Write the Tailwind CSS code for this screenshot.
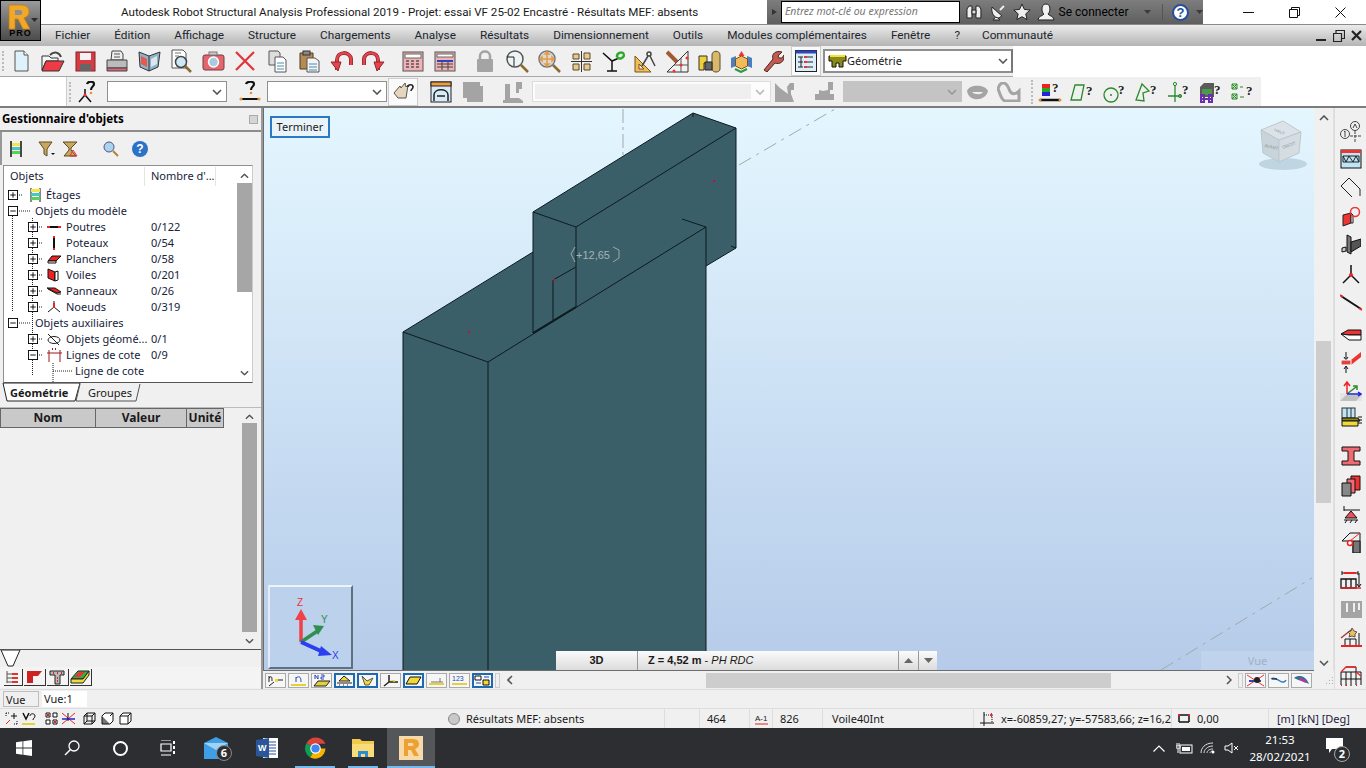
<!DOCTYPE html>
<html lang="fr">
<head>
<meta charset="UTF-8">
<title>Autodesk Robot Structural Analysis Professional 2019</title>
<script src="https://cdn.jsdelivr.net/npm/@tailwindcss/browser@4"></script>
</head>
<body class="bg-white overflow-hidden">
<!-- shared tree symbols -->
<svg class="hidden">
  <symbol id="plus" viewBox="0 0 11 11"><rect x=".5" y=".5" width="10" height="10" fill="#fff" stroke="#000"/><path d="M2.5 5.5h6M5.5 2.5v6" stroke="#000"/></symbol>
  <symbol id="minus" viewBox="0 0 11 11"><rect x=".5" y=".5" width="10" height="10" fill="#fff" stroke="#000"/><path d="M2.5 5.5h6" stroke="#000"/></symbol>
  <symbol id="chev-up" viewBox="0 0 10 6"><path d="M1 5l4-4 4 4" fill="none" stroke="#555" stroke-width="1.6"/></symbol>
  <symbol id="chev-down" viewBox="0 0 10 6"><path d="M1 1l4 4 4-4" fill="none" stroke="#555" stroke-width="1.6"/></symbol>
  <symbol id="qmark" viewBox="0 0 8 12"><text x="0" y="11" font-family="Liberation Serif" font-weight="700" font-size="13" fill="#222">?</text></symbol>
</svg>

<div class="relative w-[1366px] h-[768px] flex flex-col overflow-hidden text-[#1a1a1a] font-['Noto_Sans',sans-serif]">

  <!-- app logo, sits over title and menu bars -->
  <div class="absolute left-0 top-0 w-[41px] h-[41px] z-10 border border-black bg-linear-to-b from-[#9a9a9a] to-[#4c4c4c] overflow-hidden">
    <svg class="absolute left-[6px] top-[2px] w-[24px] h-[27px]" viewBox="0 0 24 27"><path d="M2 2h12c6 0 8 3 8 7 0 3-2 5-5 6l6 11h-7l-5-10H8v10H2z" fill="#f0a828" stroke="#c67a10" stroke-width=".7"/><path d="M8 7v5h5c3 0 3-5 0-5z" fill="#8d8d8d"/></svg>
    <svg class="absolute right-[2px] top-[17px] w-[7px] h-[4px]" viewBox="0 0 7 4"><path d="M0 0h7L3.500 4z" fill="#2b2b2b"/></svg>
    <div class="absolute left-0 right-0 bottom-[1px] text-center text-[9px] leading-[11px] font-bold tracking-[1px] text-black font-['Liberation_Sans',sans-serif]">PRO</div>
  </div>

  <!-- title bar -->
  <div class="h-[24px] flex items-center bg-white shrink-0">
    <div class="w-[767px] pl-[121px] pt-[1px] text-[11.6px] whitespace-nowrap font-['Roboto',sans-serif]">Autodesk Robot Structural Analysis Professional 2019 - Projet: essai VF 25-02 Encastré - Résultats MEF: absents</div>
    <div class="w-[436px] h-[24px] flex items-center bg-linear-to-b from-[#7d7d7d] to-[#5f5f5f]">
      <svg class="w-[14px] h-[24px]" viewBox="0 0 14 24"><path d="M5 9l5 3-5 3z" fill="#333"/></svg>
      <div class="w-[180px] h-[22px] bg-white border border-black flex items-center pl-[3px] text-[10.500px] italic text-[#777] whitespace-nowrap">Entrez mot-clé ou expression</div>
      <svg class="w-[18px] h-[18px] ml-[5px]" viewBox="0 0 18 18"><path d="M2 15V6l2-3h3v12zM11 15V3h3l2 3v9z" fill="#eee" stroke="#222"/><path d="M7 7h4v4H7z" fill="#ddd" stroke="#222"/></svg>
      <svg class="w-[18px] h-[18px] ml-[6px]" viewBox="0 0 18 18"><path d="M3 4l10 9-3 2c-5 0-8-5-7-11zM6 15l-2 2h7l-2-2" fill="#eee" stroke="#222"/><path d="M11 7l4-4" stroke="#eee" stroke-width="2"/></svg>
      <svg class="w-[18px] h-[18px] ml-[6px]" viewBox="0 0 18 18"><path d="M9 1l2.400 5.400 5.800.6-4.400 3.900 1.300 5.700L9 13.700 3.900 16.600l1.300-5.700L.8 7l5.800-.6z" fill="#eee" stroke="#222"/></svg>
      <svg class="w-[18px] h-[18px] ml-[6px]" viewBox="0 0 18 18"><path d="M9 1c3 0 4 2 4 5s-1 4-2 5c1 2 6 2 6 6H1c0-4 5-4 6-6-1-1-2-2-2-5s1-5 4-5z" fill="#f2f2f2" stroke="#222"/></svg>
      <span class="ml-[4px] text-[12px] text-black whitespace-nowrap w-[86px] font-['Roboto',sans-serif]">Se connecter</span>
      <svg class="w-[7px] h-[4px]" viewBox="0 0 7 4"><path d="M0 0h7L3.500 4z" fill="#3b3b3b"/></svg>
      <span class="ml-[11px] w-px h-[16px] bg-[#555]"></span>
      <span class="ml-[9px] w-[17px] h-[17px] rounded-full bg-white border-2 border-[#254f9c] text-[#254f9c] text-[13px] font-bold leading-[13px] text-center font-['Liberation_Sans',sans-serif]">?</span>
      <svg class="w-[7px] h-[4px] ml-[7px]" viewBox="0 0 7 4"><path d="M0 0h7L3.500 4z" fill="#3b3b3b"/></svg>
    </div>
    <div class="flex-1 flex items-center h-[24px] pl-[40px]">
      <svg class="w-[11px] h-[11px]" viewBox="0 0 11 11"><path d="M0 5.500h11" stroke="#111"/></svg>
      <svg class="w-[11px] h-[11px] ml-[35px]" viewBox="0 0 11 11"><path d="M.5 2.500h8v8h-8zM2.500 2.500v-2h8v8h-2" fill="none" stroke="#111"/></svg>
      <svg class="w-[11px] h-[11px] ml-[35px]" viewBox="0 0 11 11"><path d="M.5.500l10 10M10.500.500l-10 10" stroke="#111"/></svg>
    </div>
  </div>

  <!-- menu bar -->
  <div class="h-[22px] shrink-0 flex items-center bg-linear-to-b from-[#ececec] to-[#b4b4b4] border-t border-[#8a8a8a] text-[11.8px] text-[#20262e] whitespace-nowrap font-['Roboto',sans-serif]">
    <span class="ml-[55px]">Fichier</span>
    <span class="ml-[24px]">Édition</span>
    <span class="ml-[24px]">Affichage</span>
    <span class="ml-[24px]">Structure</span>
    <span class="ml-[24px]">Chargements</span>
    <span class="ml-[24px]">Analyse</span>
    <span class="ml-[24px]">Résultats</span>
    <span class="ml-[24px]">Dimensionnement</span>
    <span class="ml-[24px]">Outils</span>
    <span class="ml-[24px]">Modules complémentaires</span>
    <span class="ml-[24px]">Fenêtre</span>
    <span class="ml-[24px]">?</span>
    <span class="ml-[22px]">Communauté</span>
    <div class="ml-auto flex items-center gap-[6px] pr-[4px]">
      <svg class="w-[11px] h-[12px]" viewBox="0 0 11 12"><path d="M0 10h10" stroke="#222" stroke-width="2"/></svg>
      <svg class="w-[12px] h-[12px]" viewBox="0 0 12 12"><path d="M.5 3.500h8v8h-8zM3 3V.500h8.500v8H9" fill="none" stroke="#222" stroke-width="1.200"/></svg>
      <svg class="w-[11px] h-[11px]" viewBox="0 0 11 11"><path d="M1 1l9 9M10 1l-9 9" stroke="#222" stroke-width="2.200"/></svg>
    </div>
  </div>

  <!-- toolbar 1 -->
  <div class="h-[31px] shrink-0 flex items-center">
    <div class="w-[1013px] h-[31px] bg-[#f0f0f0] border-b border-[#a8a8a8] flex items-center">
      <span class="ml-[2px] w-[3px] h-[20px] border-l-2 border-dotted border-[#bbb]"></span>
      <span class="w-8 flex justify-center"><svg class="w-[22px] h-[22px]" viewBox="0 0 22 22"><path d="M5 1h9l4 4v16H5z" fill="#dff1fb" stroke="#555"/><path d="M14 1v4h4" fill="#fff" stroke="#555"/></svg></span>
      <span class="w-8 flex justify-center"><svg class="w-[24px] h-[22px]" viewBox="0 0 24 22"><path d="M1 6h7l2 2h7v3H5L1 20z" fill="#f6f6f6" stroke="#333"/><path d="M5 11h18l-5 10H1z" fill="#ee3b45" stroke="#333"/><path d="M9 5c4-4 9-3 11 2" fill="none" stroke="#444" stroke-width="2"/></svg></span>
      <span class="w-8 flex justify-center"><svg class="w-[21px] h-[21px]" viewBox="0 0 21 21"><rect x="1" y="1" width="19" height="19" fill="#d83c43" stroke="#7e2328"/><rect x="5" y="2" width="11" height="7" fill="#f3f3f3"/><rect x="5" y="13" width="11" height="7" fill="#666"/></svg></span>
      <span class="w-8 flex justify-center"><svg class="w-[22px] h-[22px]" viewBox="0 0 22 22"><path d="M6 1h9l2 3v6H5z" fill="#eee" stroke="#444"/><path d="M1 10h20v8H1z" fill="#bbb" stroke="#444"/><path d="M1 18h20v3H1z" fill="#d9667c" stroke="#444"/><path d="M8 4h6M8 7h6" stroke="#555"/></svg></span>
      <span class="w-8 flex justify-center"><svg class="w-[24px] h-[22px]" viewBox="0 0 24 22"><path d="M12 6L2 2l1 15 9 4 9-4 2-15z" fill="#8fb2c8" stroke="#333"/><path d="M12 6v15" stroke="#333"/><path d="M4 6l6 3v8l-6-3z" fill="#e8584d"/><path d="M14 9l6-3v8l-6 3z" fill="#dbe7ef"/></svg></span>
      <span class="w-8 flex justify-center"><svg class="w-[24px] h-[24px]" viewBox="0 0 24 24"><path d="M3 1h11l3 3v15H3z" fill="#fff" stroke="#555"/><circle cx="12" cy="13" r="5.500" fill="#cfe8f7" stroke="#444" stroke-width="1.500"/><path d="M16 17l6 6" stroke="#8a6a33" stroke-width="2.500"/><path d="M6 4h6M6 7h4" stroke="#777"/></svg></span>
      <span class="w-8 flex justify-center"><svg class="w-[23px] h-[20px]" viewBox="0 0 23 20"><rect x="1" y="4" width="21" height="15" rx="2" fill="#e36570" stroke="#7a3a40"/><rect x="7" y="1" width="8" height="3" fill="#ccc" stroke="#777"/><circle cx="11.500" cy="11" r="5" fill="#a9cbe0" stroke="#fff" stroke-width="1.500"/></svg></span>
      <span class="w-8 flex justify-center"><svg class="w-[22px] h-[22px]" viewBox="0 0 22 22"><path d="M2 2l18 18M20 2L2 20" stroke="#e2333b" stroke-width="2.200"/></svg></span>
      <span class="w-8 flex justify-center"><svg class="w-[21px] h-[23px]" viewBox="0 0 21 23"><path d="M2 1h9l2 2v12H2z" fill="#ddd" stroke="#555"/><path d="M8 7h8l3 3v12H8z" fill="#fff" stroke="#555"/><path d="M10 13h7M10 16h7M10 19h7" stroke="#4a8cb0"/></svg></span>
      <span class="w-8 flex justify-center"><svg class="w-[21px] h-[23px]" viewBox="0 0 21 23"><path d="M1 3h13v16H1z" fill="#b68a54" stroke="#4e3b1f"/><rect x="4" y="1" width="7" height="4" fill="#888" stroke="#333"/><path d="M8 8h8l4 3v11H8z" fill="#f4f4f4" stroke="#555"/><path d="M10 14h8M10 17h8M10 20h8" stroke="#4a8cb0"/></svg></span>
      <span class="w-8 flex justify-center"><svg class="w-[23px] h-[22px]" viewBox="0 0 23 22"><path d="M7 20V10c0-9 13-9 14-1v6" fill="none" stroke="#8d2a30" stroke-width="4"/><path d="M7 20V10c0-9 13-9 14-1v6" fill="none" stroke="#e8434a" stroke-width="2.400"/><path d="M1 12l7 9 3-9z" fill="#e8434a" stroke="#8d2a30"/></svg></span>
      <span class="w-8 flex justify-center"><svg class="w-[23px] h-[22px]" viewBox="0 0 23 22"><path d="M16 20V10C16 1 3 1 2 9v6" fill="none" stroke="#8d2a30" stroke-width="4"/><path d="M16 20V10C16 1 3 1 2 9v6" fill="none" stroke="#e8434a" stroke-width="2.400"/><path d="M22 12l-7 9-3-9z" fill="#e8434a" stroke="#8d2a30"/></svg></span>
      <span class="w-8 flex justify-center ml-[8px]"><svg class="w-[22px] h-[21px]" viewBox="0 0 22 21"><rect x="1" y="1" width="20" height="19" fill="#f1b2b5" stroke="#555"/><rect x="3" y="3" width="16" height="4" fill="#fff" stroke="#666"/><path d="M4 10h3M9 10h3M14 10h3M4 13h3M9 13h3M14 13h3M4 16h3M9 16h3M14 16h3" stroke="#555" stroke-width="1.500"/></svg></span>
      <span class="w-8 flex justify-center"><svg class="w-[22px] h-[21px]" viewBox="0 0 22 21"><rect x="1" y="1" width="20" height="19" fill="#f1b2b5" stroke="#555"/><rect x="3" y="3" width="16" height="3" fill="#fff" stroke="#666"/><rect x="3" y="9" width="16" height="2" fill="#2a46b8"/><path d="M3 13h16M3 16h16M8 11v8M14 11v8" stroke="#444"/></svg></span>
      <span class="w-8 flex justify-center ml-[8px]"><svg class="w-[16px] h-[22px]" viewBox="0 0 16 22"><path d="M3 9V6c0-6 10-6 10 0v3" fill="none" stroke="#a4a4a4" stroke-width="2.500"/><rect y="9" width="16" height="13" rx="1" fill="#a4a4a4"/></svg></span>
      <span class="w-8 flex justify-center"><svg class="w-[24px] h-[24px]" viewBox="0 0 24 24"><circle cx="10" cy="10" r="8" fill="#eef3f6" stroke="#555" stroke-width="1.500"/><path d="M2 8h7v9" fill="none" stroke="#222"/><path d="M16 16l7 7" stroke="#8a6a33" stroke-width="2.500"/></svg></span>
      <span class="w-8 flex justify-center"><svg class="w-[24px] h-[24px]" viewBox="0 0 24 24"><circle cx="10" cy="10" r="8" fill="#d6dadd" stroke="#777" stroke-width="1.500"/><path d="M10 3v14M3 10h14M10 3l-2 2h4zM10 17l-2-2h4zM3 10l2-2v4zM17 10l-2-2v4z" fill="#e99a3e" stroke="#e99a3e" stroke-width="1.500"/><path d="M16 16l7 7" stroke="#8a6a33" stroke-width="2.500"/></svg></span>
      <span class="w-8 flex justify-center"><svg class="w-[23px] h-[23px]" viewBox="0 0 23 23"><path d="M11.500 1v21M1 11.500h21" stroke="#333"/><path d="M3 4h6v5H3zM14 3h6v6h-6zM3 14h6v6H3zM14 14h6v6h-6z" fill="#e6c994" stroke="#5e4a25"/></svg></span>
      <span class="w-8 flex justify-center"><svg class="w-[23px] h-[21px]" viewBox="0 0 23 21"><path d="M1 2l9 8 7-3M10 10v10M5 20h10" fill="none" stroke="#111" stroke-width="1.500"/><path d="M15 6a4 4 0 0 1 7-3M22 3a4 4 0 0 1-7 3" fill="none" stroke="#2eaa2e" stroke-width="2.500"/></svg></span>
      <span class="w-8 flex justify-center"><svg class="w-[23px] h-[23px]" viewBox="0 0 23 23"><path d="M1 22L1 6l16 16z" fill="#f0bd5a" stroke="#7b5416"/><path d="M5 14l5 5H5z" fill="#f0f0f0" stroke="#7b5416"/><circle cx="15" cy="4" r="2" fill="none" stroke="#444" stroke-width="1.500"/><path d="M14 6L8 16M16 6l5 10" stroke="#444" stroke-width="1.500"/></svg></span>
      <span class="w-8 flex justify-center"><svg class="w-[23px] h-[23px]" viewBox="0 0 23 23"><path d="M22 1v21H1z" fill="#f2f2f2" stroke="#333"/><path d="M8 15h14M15 8v14" stroke="#555"/><path d="M1 2l10 10" stroke="#a15b31" stroke-width="4"/><circle cx="15" cy="15" r="1.500" fill="#e33"/><circle cx="8" cy="21" r="1.500" fill="#e33"/><circle cx="21" cy="8" r="1.500" fill="#e33"/></svg></span>
      <span class="w-8 flex justify-center"><svg class="w-[23px] h-[23px]" viewBox="0 0 23 23"><path d="M1 6h8v7H6v7H1z" fill="#f0d03a" stroke="#333"/><path d="M14 5c0-5 8-5 8 0v14c0 4-8 4-8 0z" fill="#d8b86c" stroke="#5a4a22"/><path d="M7 12h7v8H7z" fill="#666" stroke="#222"/></svg></span>
      <span class="w-8 flex justify-center"><svg class="w-[23px] h-[23px]" viewBox="0 0 23 23"><path d="M11.500 1l-3 5h6z" fill="#e33"/><path d="M1 8l5-2v10l-5 2zM22 8l-5-2v10l5 2z" fill="#4a7ec2"/><path d="M11.500 6l6 3v7l-6 3-6-3V9z" fill="#f2bb5a" stroke="#7b5416"/><path d="M5 19l6 3 6-3" fill="none" stroke="#2a9a3e" stroke-width="2"/></svg></span>
      <span class="w-8 flex justify-center"><svg class="w-[22px] h-[22px]" viewBox="0 0 22 22"><path d="M2 20L11 9c-2-5 3-9 9-7l-4 4 1 2 3 0 2-3c1 6-4 10-9 8L5 22z" fill="#c25a50" stroke="#4a2a25"/></svg></span>
      <span class="w-[30px] h-[30px] ml-[2px] flex items-center justify-center bg-[#fafafa] border border-[#ccc]"><svg class="w-[22px] h-[22px]" viewBox="0 0 22 22"><rect x=".5" y=".5" width="21" height="21" fill="#dceefa" stroke="#222"/><rect x=".5" y=".5" width="21" height="3" fill="#2a46b8"/><path d="M3 7h5M3 12h5M3 17h5M6 7v10M10 7h8M10 12h8M10 17h8" stroke="#222"/><path d="M9 7h3M9 12h3M9 17h3" stroke="#e33" stroke-width="2"/></svg></span>
      <div class="ml-[2px] w-[190px] h-[24px] bg-white border-2 border-[#8f8f8f] border-r-[#777] flex items-center pl-[3px] text-[11px]">
        <svg class="w-[19px] h-[13px]" viewBox="0 0 19 13"><path d="M1 1h17v5h-3v6h-4V8H8v4H4V6H1z" fill="#8a8a18" stroke="#111"/><path d="M2 1h15" stroke="#f3e232" stroke-width="2"/></svg>
        <span class="pt-[1px]">Géométrie</span>
        <svg class="w-[10px] h-[6px] ml-auto mr-[3px]" viewBox="0 0 10 6"><use href="#chev-down"/></svg>
      </div>
    </div>
  </div>

  <!-- toolbar 2 -->
  <div class="h-[31px] shrink-0 flex items-center border-b-2 border-[#7c7c7c]">
    <div class="w-[66px]"></div>
    <div class="w-[1195px] h-[29px] bg-[#f0f0f0] flex items-center border-l border-[#ccc]">
      <span class="ml-[2px] w-[3px] h-[20px] border-l-2 border-dotted border-[#bbb]"></span>
      <span class="w-8 flex justify-center"><svg class="w-[22px] h-[22px]" viewBox="0 0 22 22"><path d="M8 8v6L2 21M8 14l6 7" fill="none" stroke="#111" stroke-width="1.500"/><circle cx="8" cy="14" r="1.500" fill="#e33"/><path d="M10 3c1-3 7-3 7 0 0 3-3 2-3 6" fill="none" stroke="#111" stroke-width="2.200"/><circle cx="14" cy="12" r="1.300" fill="#e9952c"/></svg></span>
      <div class="ml-[3px] w-[120px] h-[21px] bg-white border border-[#8f8f8f] flex items-center justify-end pr-[4px]"><svg class="w-[10px] h-[6px]" viewBox="0 0 10 6"><use href="#chev-down"/></svg></div>
      <span class="ml-[7px] w-8 flex justify-center"><svg class="w-[22px] h-[22px]" viewBox="0 0 22 22"><path d="M1 18h20" stroke="#111" stroke-width="2"/><circle cx="2" cy="18" r="1.600" fill="#e9952c"/><circle cx="20" cy="18" r="1.600" fill="#e9952c"/><path d="M7 3c1-3 8-3 8 0 0 3-3 2-3 6" fill="none" stroke="#111" stroke-width="2.200"/><circle cx="12" cy="12" r="1.300" fill="#e9952c"/></svg></span>
      <div class="ml-[1px] w-[120px] h-[21px] bg-white border border-[#8f8f8f] flex items-center justify-end pr-[4px]"><svg class="w-[10px] h-[6px]" viewBox="0 0 10 6"><use href="#chev-down"/></svg></div>
      <span class="ml-[1px] w-[30px] h-[28px] bg-[#fafafa] border border-[#ccc] flex items-center justify-center"><svg class="w-[22px] h-[20px]" viewBox="0 0 22 20"><path d="M2 11l6-7 1 2 4-5 1 4 2-2-2 13H6z" fill="#e6d6bc" stroke="#555"/><path d="M16 5c0-3 5-3 5 0 0 2-2 2-2 4" fill="none" stroke="#222" stroke-width="1.600"/></svg></span>
      <span class="ml-[7px] w-8 flex justify-center"><svg class="w-[22px] h-[22px]" viewBox="0 0 22 22"><rect x="1" y="1" width="20" height="20" fill="#d8ecf8" stroke="#222"/><rect x="1" y="1" width="20" height="4" fill="#ef9a3c" stroke="#222"/><path d="M4 20v-6c0-7 14-7 14 0v6M7 15h8" fill="none" stroke="#222" stroke-width="1.500"/></svg></span>
      <span class="w-8 flex justify-center"><svg class="w-[22px] h-[22px]" viewBox="0 0 22 22"><path d="M1 1h17v4h3v16H5v-4H1z" fill="#a4a4a4"/></svg></span>
      <span class="ml-[8px] w-8 flex justify-center"><svg class="w-[22px] h-[22px]" viewBox="0 0 22 22"><path d="M3 3h5v14h9l4 3v2H1v-3h2zM14 1h6v7h-3v4h-3z" fill="#a4a4a4"/></svg></span>
      <div class="ml-[3px] w-[239px] h-[21px] bg-[#fcfcfc] border border-[#dcdcdc] flex items-center justify-end pr-[5px]"><div class="mr-auto ml-[2px] w-[216px] h-[15px] bg-[#efefef]"></div><svg class="w-[10px] h-[6px] opacity-40" viewBox="0 0 10 6"><use href="#chev-down"/></svg></div>
      <span class="ml-[-2px] w-8 flex justify-center"><svg class="w-[22px] h-[22px]" viewBox="0 0 22 22"><path d="M1 2l5 5 8 6-1-7 3-4h4v7h-3v4l3 8H1z" fill="#a4a4a4"/></svg></span>
      <span class="ml-[8px] w-8 flex justify-center"><svg class="w-[22px] h-[22px]" viewBox="0 0 22 22"><path d="M14 1h5v8h-3v4h4v6H1v-6h4v-4l4 1 5-1z" fill="#a4a4a4"/></svg></span>
      <div class="ml-[2px] w-[119px] h-[21px] bg-[#c4c4c4] flex items-center justify-end pr-[5px]"><svg class="w-[10px] h-[6px] opacity-40" viewBox="0 0 10 6"><use href="#chev-down"/></svg></div>
      <span class="w-8 flex justify-center -ml-[1px]"><svg class="w-[24px] h-[18px]" viewBox="0 0 24 18"><path d="M2 8c2-7 18-7 21 0-2 10-19 12-21 0z" fill="#a4a4a4"/><path d="M7 9c3 3 9 3 11 0z" fill="#f0f0f0"/></svg></span>
      <span class="w-8 flex justify-center"><svg class="w-[24px] h-[20px]" viewBox="0 0 24 20"><path d="M1 7c2-8 8-8 11 0 2 6 6 6 10 2v10H8c-4-1-5-8-7-12z" fill="none" stroke="#a4a4a4" stroke-width="3"/></svg></span>
      <span class="ml-[6px] w-[3px] h-[24px] border-l-2 border-dotted border-[#bbb]"></span>
      <span class="w-8 flex justify-center"><svg class="w-[24px] h-[22px]" viewBox="0 0 24 22"><rect x="4" y="3" width="8" height="4" fill="#e22"/><rect x="4" y="7" width="8" height="4" fill="#2a2"/><rect x="4" y="11" width="8" height="4" fill="#22d"/><path d="M2 19h20" stroke="#111" stroke-width="2.500"/><circle cx="2" cy="19" r="1.500" fill="#e9952c"/><circle cx="22" cy="19" r="1.500" fill="#e9952c"/><use href="#qmark" x="14" y="0" width="8" height="12"/></svg></span>
      <span class="w-8 flex justify-center"><svg class="w-[24px] h-[22px]" viewBox="0 0 24 22"><path d="M5 4h9l-3 15H1z" fill="none" stroke="#2a8a2a" stroke-width="1.300"/><use href="#qmark" x="16" y="3" width="8" height="12"/></svg></span>
      <span class="w-8 flex justify-center"><svg class="w-[24px] h-[22px]" viewBox="0 0 24 22"><circle cx="9" cy="14" r="7" fill="none" stroke="#2a8a2a" stroke-width="1.300"/><circle cx="9" cy="14" r="1" fill="#2a8a2a"/><use href="#qmark" x="16" y="2" width="8" height="12"/></svg></span>
      <span class="w-8 flex justify-center"><svg class="w-[24px] h-[22px]" viewBox="0 0 24 22"><path d="M8 3l7 7-6 2 1 8-8-1z" fill="none" stroke="#2a8a2a" stroke-width="1.300"/><use href="#qmark" x="16" y="2" width="8" height="12"/></svg></span>
      <span class="w-8 flex justify-center"><svg class="w-[24px] h-[22px]" viewBox="0 0 24 22"><path d="M9 4v17M2 15h14" stroke="#2a8a2a" stroke-width="1.300"/><circle cx="9" cy="3" r="1.600" fill="none" stroke="#2a8a2a"/><circle cx="14" cy="15" r="1.600" fill="none" stroke="#2a8a2a"/><use href="#qmark" x="16" y="2" width="8" height="12"/></svg></span>
      <span class="w-8 flex justify-center"><svg class="w-[24px] h-[22px]" viewBox="0 0 24 22"><path d="M2 6l4-4h10v14H2z" fill="#5b5b5b"/><path d="M4 8h10v6H4z" fill="#4c9a4c"/><path d="M3 14h3v7H3zM11 14h3v7h-3zM3 18h11" fill="none" stroke="#6a2fb0" stroke-width="2"/><use href="#qmark" x="16" y="2" width="8" height="12"/></svg></span>
      <span class="w-8 flex justify-center"><svg class="w-[24px] h-[22px]" viewBox="0 0 24 22"><path d="M2 3h5v5H2zM2 13h5v5H2z" fill="#cfe6cf" stroke="#2a8a2a"/><path d="M2 3l5 5M7 3L2 8M2 13l5 5M7 13l-5 5M10 6h3M10 16h4" stroke="#2a8a2a"/><use href="#qmark" x="16" y="3" width="8" height="12"/></svg></span>
    </div>
  </div>

  <!-- main area -->
  <div class="h-[581px] shrink-0 flex">

    <!-- object manager -->
    <div class="w-[263px] h-[581px] shrink-0 bg-[#f0f0f0] border-r-2 border-[#9a9a9a] flex flex-col text-[11px]">
      <div class="h-[24px] shrink-0 flex items-center justify-between pl-[2px] pr-[3px] border-b-2 border-[#8c8c8c]">
        <span class="font-bold text-[11.500px] text-black">Gestionnaire d'objets</span>
        <span class="w-[9px] h-[9px] bg-[#d5d5d5] border border-[#aaa]"></span>
      </div>
      <div class="h-[33px] shrink-0 flex items-center border-l-2 border-[#999]">
        <svg class="ml-[8px] w-[13px] h-[16px]" viewBox="0 0 13 16"><path d="M1 0v16M11 0v16" stroke="#111" stroke-width="1.500"/><rect x="2" y="2" width="8" height="3" fill="#f5e54a"/><rect x="2" y="6" width="8" height="3" fill="#49c6c6"/><rect x="2" y="10" width="8" height="3" fill="#55d455"/></svg>
        <svg class="ml-[15px] w-[17px] h-[16px]" viewBox="0 0 17 16"><path d="M1 1h13L9 8v7L6 13V8z" fill="#c8a85c" stroke="#5e4a25"/><path d="M13 12h4l-2 2z" fill="#111"/></svg>
        <svg class="ml-[7px] w-[16px] h-[16px]" viewBox="0 0 16 16"><path d="M1 1h14L9 7v2l5 6H2l5-6V7z" fill="#c8a85c" stroke="#5e4a25"/><path d="M11 9l4 6H8z" fill="none" stroke="#d33"/></svg>
        <svg class="ml-[25px] w-[16px] h-[16px]" viewBox="0 0 16 16"><circle cx="6" cy="6" r="5" fill="#a8d4ef" stroke="#557"/><path d="M10 10l5 5" stroke="#a8843e" stroke-width="2"/></svg>
        <span class="ml-[13px] w-[16px] h-[16px] rounded-full bg-[#2d72c4] text-white text-[12px] font-bold leading-[16px] text-center font-['Liberation_Sans',sans-serif]">?</span>
      </div>
      <!-- tree -->
      <div class="relative ml-[3px] w-[250px] h-[218px] shrink-0 bg-white border border-[#8f8f8f] border-r-[#ccc] border-b-[#555] text-[#16233a]">
        <div class="h-[20px] pt-[1px] flex items-center pl-[6px]"><span class="w-[134px]">Objets</span><span class="h-[19px] w-px bg-[#e4e4e4]"></span><span class="pl-[6px] w-[70px]">Nombre d'...</span><span class="h-[19px] w-px bg-[#e4e4e4]"></span></div>
        <!-- dotted connectors of the tree -->
        <svg class="absolute left-[-4px] top-[1px] w-[100px] h-[215px]" viewBox="0 0 100 215" fill="none" stroke="#222" stroke-dasharray="1 1">
          <path d="M17 28h6M12.500 49v96M17 44h14M17 156h14M32.500 51v128M32.500 167v41M37 60h5M37 76h5M37 92h5M37 108h5M37 124h5M37 140h5M37 172h5M37 188h5M53 196v19M53 204h19"/>
        </svg>
        <div class="relative pt-[1px]">
          <div class="h-4 flex items-center"><svg class="ml-[4px] w-[10px] h-[10px]"><use href="#plus"/></svg><svg class="ml-[12px] w-[11px] h-[14px]" viewBox="0 0 11 14"><path d="M1 0v14M10 0v14" stroke="#111"/><rect x="1" y="1" width="9" height="3" fill="#f5e54a"/><rect x="1" y="5" width="9" height="3" fill="#49c6c6"/><rect x="1" y="9" width="9" height="3" fill="#55d455"/></svg><span class="ml-[5px]">Étages</span></div>
          <div class="h-4 flex items-center"><svg class="ml-[4px] w-[10px] h-[10px]"><use href="#minus"/></svg><span class="ml-[17px] bg-white">Objets du modèle</span></div>
          <div class="h-4 flex items-center"><svg class="ml-[24px] w-[10px] h-[10px]"><use href="#plus"/></svg><svg class="ml-[9px] w-[14px] h-[6px]" viewBox="0 0 14 6"><path d="M0 3h14" stroke="#111" stroke-width="2"/><path d="M0 3h3M11 3h3" stroke="#e22" stroke-width="2"/></svg><span class="ml-[5px] w-[85px]">Poutres</span><span>0/122</span></div>
          <div class="h-4 flex items-center"><svg class="ml-[24px] w-[10px] h-[10px]"><use href="#plus"/></svg><svg class="ml-[9px] w-[14px] h-[14px]" viewBox="0 0 14 14"><path d="M7 0v14" stroke="#111" stroke-width="2"/><path d="M7 0v2M7 12v2" stroke="#e22" stroke-width="2"/></svg><span class="ml-[5px] w-[85px]">Poteaux</span><span>0/54</span></div>
          <div class="h-4 flex items-center"><svg class="ml-[24px] w-[10px] h-[10px]"><use href="#plus"/></svg><svg class="ml-[9px] w-[14px] h-[9px]" viewBox="0 0 14 9"><path d="M1 6l4-5h9L9 6z" fill="#e22" stroke="#111"/><path d="M1 6h8v2H1z" fill="#fff" stroke="#111"/></svg><span class="ml-[5px] w-[85px]">Planchers</span><span>0/58</span></div>
          <div class="h-4 flex items-center"><svg class="ml-[24px] w-[10px] h-[10px]"><use href="#plus"/></svg><svg class="ml-[9px] w-[14px] h-[14px]" viewBox="0 0 14 14"><path d="M1 1l7 3v9L1 10z" fill="#e22" stroke="#111"/><path d="M8 4l3-1v9l-3 1z" fill="#fff" stroke="#111"/></svg><span class="ml-[5px] w-[85px]">Voiles</span><span>0/201</span></div>
          <div class="h-4 flex items-center"><svg class="ml-[24px] w-[10px] h-[10px]"><use href="#plus"/></svg><svg class="ml-[9px] w-[14px] h-[9px]" viewBox="0 0 14 9"><path d="M0 1h8l6 4-4 1z" fill="#e22" stroke="#111"/><path d="M1 2l9 5h4" fill="none" stroke="#111"/></svg><span class="ml-[5px] w-[85px]">Panneaux</span><span>0/26</span></div>
          <div class="h-4 flex items-center"><svg class="ml-[24px] w-[10px] h-[10px]"><use href="#plus"/></svg><svg class="ml-[9px] w-[14px] h-[12px]" viewBox="0 0 14 12"><path d="M7 0v6L1 11M7 6l6 5" fill="none" stroke="#111"/><path d="M7 2v5" stroke="#e22" stroke-width="2"/></svg><span class="ml-[5px] w-[85px]">Noeuds</span><span>0/319</span></div>
          <div class="h-4 flex items-center"><svg class="ml-[4px] w-[10px] h-[10px]"><use href="#minus"/></svg><span class="ml-[17px] bg-white">Objets auxiliaires</span></div>
          <div class="h-4 flex items-center"><svg class="ml-[24px] w-[10px] h-[10px]"><use href="#plus"/></svg><svg class="ml-[9px] w-[14px] h-[13px]" viewBox="0 0 14 13"><path d="M1 1l11 11" stroke="#222"/><ellipse cx="7" cy="7" rx="6" ry="3.500" fill="none" stroke="#222"/></svg><span class="ml-[5px] w-[85px] whitespace-nowrap">Objets géomé...</span><span>0/1</span></div>
          <div class="h-4 flex items-center"><svg class="ml-[24px] w-[10px] h-[10px]"><use href="#minus"/></svg><svg class="ml-[9px] w-[15px] h-[14px]" viewBox="0 0 15 14"><path d="M0 5h15M2 2v12M13 2v12" stroke="#9a1b1b"/><path d="M5 1h1M8 1h1" stroke="#9a1b1b" stroke-width="2"/></svg><span class="ml-[4px] w-[85px]">Lignes de cote</span><span>0/9</span></div>
          <div class="h-4 flex items-center"><span class="ml-[71px] bg-white">Ligne de cote</span></div>
        </div>
        <!-- tree scrollbar -->
        <div class="absolute right-0 top-0 bottom-0 w-[16px] bg-white flex flex-col items-center">
          <svg class="mt-[7px] w-[9px] h-[6px]" viewBox="0 0 10 6"><use href="#chev-up"/></svg>
          <div class="mt-[4px] w-[15px] h-[109px] bg-[#a6a6a6]"></div>
          <svg class="mt-auto mb-[6px] w-[9px] h-[6px]" viewBox="0 0 10 6"><use href="#chev-down"/></svg>
        </div>
      </div>
      <!-- tabs -->
      <div class="relative h-[20px] shrink-0 text-[11px]">
        <svg class="absolute inset-0 w-[261px] h-[20px]" viewBox="0 0 261 20"><path d="M3 0l4 18h68l5-18z" fill="#fff" stroke="#222"/><path d="M80 1l-4 17h60l4-17" fill="#f0f0f0" stroke="#555"/></svg>
        <span class="absolute left-[10px] top-[2px] font-bold">Géométrie</span>
        <span class="absolute left-[88px] top-[2px]">Groupes</span>
      </div>
      <div class="h-[5px] shrink-0 border-b border-[#bbb]"></div>
      <!-- properties -->
      <div class="relative h-[241px] shrink-0 flex bg-[#f0f0f0]">
        <div class="w-[224px]">
          <div class="h-[20px] flex bg-[#c9c9c9] border border-[#666] text-[12px] font-bold leading-[18px] text-center"><span class="w-[95px] border-r border-[#666]">Nom</span><span class="w-[91px] border-r border-[#666]">Valeur</span><span class="flex-1">Unité</span></div>
        </div>
        <div class="ml-[17px] w-[16px] flex flex-col items-center">
          <svg class="mt-[6px] w-[9px] h-[6px]" viewBox="0 0 10 6"><use href="#chev-up"/></svg>
          <div class="mt-[3px] w-[15px] h-[209px] bg-[#a6a6a6]"></div>
          <svg class="mt-[6px] w-[9px] h-[6px]" viewBox="0 0 10 6"><use href="#chev-down"/></svg>
        </div>
      </div>
      <!-- little empty tab strip -->
      <div class="h-[18px] shrink-0 relative border-t border-[#555]">
        <svg class="absolute left-0 top-0 w-[22px] h-[17px]" viewBox="0 0 22 17"><path d="M1 0l7 16h5l7-16z" fill="#fff" stroke="#222"/></svg>
      </div>
      <!-- panel view buttons -->
      <div class="h-[21px] shrink-0 flex items-center gap-[1px] pl-[4px] bg-[#f4f4f4]">
        <span class="w-[19px] h-[17px] border-b border-r border-[#333]"><svg class="w-[18px] h-[16px]" viewBox="0 0 18 16"><path d="M3 2v12M3 5h5M3 9h5M3 13h5" stroke="#555"/><path d="M8 5h6M8 9h6M8 13h6" stroke="#d33" stroke-width="2"/></svg></span>
        <span class="w-[22px] h-[17px] border-b border-r border-[#333]"><svg class="w-[20px] h-[16px]" viewBox="0 0 20 16"><path d="M3 2h15l-4 5H9v7H3z" fill="#c22"/></svg></span>
        <span class="w-[22px] h-[17px] border-b border-r border-[#333]"><svg class="w-[20px] h-[16px]" viewBox="0 0 20 16"><path d="M3 2h14v4h-4v9H8V6H3z" fill="#b9b9b9" stroke="#222"/><path d="M6 4h1M10 4h1M14 4h1M10 9h1M10 12h1" stroke="#d22" stroke-width="2"/></svg></span>
        <span class="w-[22px] h-[17px] border-b border-r border-[#333]"><svg class="w-[20px] h-[16px]" viewBox="0 0 20 16"><path d="M1 10l7-8h11l-6 8z" fill="#2fb24a" stroke="#222"/><path d="M4 8l5-5h6l-5 5z" fill="#e33"/><path d="M1 10h12l6-8v4l-6 8H1z" fill="#f0d93a" stroke="#222"/></svg></span>
      </div>
    </div>

    <!-- centre -->
    <div class="w-[1071px] shrink-0 flex flex-col">
      <div class="h-[563px] flex">
        <!-- 3D view -->
        <div class="relative w-[1051px] h-[563px] bg-linear-to-b from-[#e4f7ff] to-[#b5cbe9] border-l border-[#6c6c6c] border-b overflow-hidden text-[11px]">
          <svg class="absolute inset-0 w-[1051px] h-[563px]" viewBox="264 108 1051 563">
            <path d="M623 109v72" stroke="#a2a8ac" stroke-width="1" stroke-dasharray="14 4 3 4" fill="none"/>
            <path d="M739 165L835 109M1161 670L1312 578" stroke="#a2a8ac" fill="none" stroke-dasharray="14 6 3 6"/>
            <path d="M403 332L533 252V212L693 113L736 128V248L706 266V671H403z" fill="#3a5f68"/>
            <g fill="none" stroke="#0d1a20" stroke-width="1">
              <path d="M403 332L533 252M533 212L693 113L736 128L576 227L533 212V333M736 128V248L706 266M576 227V307M403 332V671M403 332L488 362V671M488 362L706 227V671M682 219L706 227M553 280L576 267M553 280V320"/>
              <path d="M533 333L576 307" stroke-width="2"/>
              <path d="M693 113v4M731 246l5 2"/>
            </g>
            <rect x="468" y="331" width="2" height="2" fill="#c8102e"/><rect x="713" y="180" width="2" height="2" fill="#c8102e"/><rect x="553" y="279" width="2" height="2" fill="#c8102e"/>
            <path d="M575 247l-4 7 4 8M613 247l6 3v8l-6 4" fill="none" stroke="#9ea8ad"/>
          </svg>
          <span class="absolute left-[312px] top-[139px] text-[#a8b2b6] font-['Liberation_Sans',sans-serif]">+12,65</span>
          <!-- finish button -->
          <div class="absolute left-[6px] top-[8px] w-[60px] h-[22px] bg-[#e8f3fa] border-2 border-[#2b78c4] flex items-center justify-center text-[11px] text-[#222]">Terminer</div>
          <!-- view cube -->
          <svg class="absolute left-[989px] top-[10px] w-[60px] h-[56px]" viewBox="0 0 60 56">
            <ellipse cx="30" cy="46" rx="24" ry="6" fill="#9fb7c8" opacity=".5"/>
            <path d="M8 12L30 3 48 14 26 22z" fill="#dbe3e8" stroke="#bcc7ce"/>
            <path d="M8 12l18 10v22L10 35z" fill="#c9d3da" stroke="#bcc7ce"/>
            <path d="M26 22l22-8-2 21-20 9z" fill="#d5dde3" stroke="#bcc7ce"/>
            <text x="11" y="29" font-size="4.500" fill="#8b979f" font-family="Liberation Sans" transform="rotate(12 11 29)">AVANT</text>
            <text x="30" y="31" font-size="4.500" fill="#8b979f" font-family="Liberation Sans" transform="rotate(-20 30 31)">DROIT</text>
            <text x="21" y="13" font-size="4" fill="#8b979f" font-family="Liberation Sans" transform="rotate(20 21 13)">HAUT</text>
          </svg>
          <!-- axes -->
          <div class="absolute left-[4px] top-[477px] w-[85px] h-[84px] bg-[#bcd1ec] border-2 border-t-[#eef3fa] border-l-[#e4ecf7] border-r-[#607080] border-b-[#607080]">
            <svg class="w-[81px] h-[80px]" viewBox="0 0 81 80">
              <path d="M31 55V28" stroke="#f04048" stroke-width="3.500"/><path d="M25 33l6-11 6 11z" fill="#f04048"/>
              <path d="M31 55l18-12" stroke="#2f8f4e" stroke-width="3.500"/><path d="M43 38l11 1-6 9z" fill="#2f8f4e"/>
              <path d="M31 55l22 10" stroke="#2b3ff0" stroke-width="4"/><path d="M51 59l11 9-14 1z" fill="#2b3ff0"/>
              <text x="27" y="19" font-size="10" fill="#e33" font-family="Liberation Sans">Z</text>
              <text x="51" y="36" font-size="10" fill="#2f8f4e" font-family="Liberation Sans">Y</text>
              <text x="62" y="72" font-size="10" fill="#2b3ff0" font-family="Liberation Sans">X</text>
            </svg>
          </div>
          <!-- level bar -->
          <div class="absolute left-[292px] bottom-0 w-[381px] h-[19px] flex items-center bg-linear-to-b from-[#fbfbfb] to-[#dcdcdc] text-[11px] font-['Liberation_Sans',sans-serif]">
            <span class="w-[81px] text-center font-bold">3D</span>
            <span class="h-[19px] w-px bg-[#999]"></span>
            <span class="pl-[10px] w-[260px]"><b class="font-bold">Z = 4,52 m</b> - <i>PH RDC</i></span>
            <span class="h-[19px] w-px bg-[#999]"></span>
            <span class="w-[19px] flex justify-center"><svg class="w-[9px] h-[5px]" viewBox="0 0 9 5"><path d="M0 5h9L4.500 0z" fill="#666"/></svg></span>
            <span class="h-[19px] w-px bg-[#999]"></span>
            <span class="w-[18px] flex justify-center"><svg class="w-[9px] h-[5px]" viewBox="0 0 9 5"><path d="M0 0h9L4.500 5z" fill="#666"/></svg></span>
          </div>
          <div class="absolute right-0 bottom-0 w-[113px] h-[19px] bg-white/15 text-center text-[11px] text-[#9fb0c4] leading-[19px]">Vue</div>
        </div>
        <!-- vertical scrollbar -->
        <div class="w-[20px] bg-[#f0f0f0] flex flex-col items-center border-r border-[#e0e0e0]">
          <svg class="mt-[7px] w-[10px] h-[6px]" viewBox="0 0 10 6"><use href="#chev-up"/></svg>
          <div class="mt-[220px] w-[15px] h-[162px] bg-[#cdcdcd]"></div>
          <svg class="mt-auto mb-[5px] w-[10px] h-[6px]" viewBox="0 0 10 6"><use href="#chev-down"/></svg>
        </div>
      </div>
      <!-- view buttons and horizontal scrollbar -->
      <div class="h-[18px] flex items-center bg-[#f0f0f0] pl-[2px]">
        <div class="flex gap-[2px]">
          <span class="w-[21px] h-[15px] border border-[#aaa] bg-[#f6f6f6]"><svg class="w-[19px] h-[13px]" viewBox="0 0 19 13"><path d="M3 2v6M3 4c3-3 3 0 3 3M3 12l5-4" fill="none" stroke="#222"/><path d="M11 6h6" stroke="#222"/><rect x="9" y="5" width="3" height="3" fill="#f0d93a"/></svg></span>
          <span class="w-[21px] h-[15px] border border-[#aaa] bg-[#f6f6f6]"><svg class="w-[19px] h-[13px]" viewBox="0 0 19 13"><path d="M7 8V3M7 4c4-3 5 0 5 4" fill="none" stroke="#2a46b8"/><path d="M2 11h15" stroke="#e3d13a" stroke-width="2"/></svg></span>
          <span class="w-[21px] h-[15px] border border-[#aaa] bg-[#f6f6f6]"><svg class="w-[19px] h-[13px]" viewBox="0 0 19 13"><path d="M2 12l4-5h12l-4 5z" fill="#e3d13a" stroke="#222"/><path d="M3 5V1l3 4V1M9 1h3v2H9v2h3" fill="none" stroke="#2a46b8"/></svg></span>
          <span class="w-[21px] h-[15px] border-2 border-[#1e6ab0] bg-[#f6f6f6]"><svg class="w-[17px] h-[11px]" viewBox="0 0 17 11"><path d="M3 6l5-5 6 5z" fill="#f0d93a" stroke="#222"/><path d="M1 8h15M3 10h1M7 10h1M11 10h1" stroke="#222"/></svg></span>
          <span class="w-[21px] h-[15px] border-2 border-[#1e6ab0] bg-[#f6f6f6]"><svg class="w-[17px] h-[11px]" viewBox="0 0 17 11"><path d="M3 1l5 5 6-3-4 7H6z" fill="#f0d93a" stroke="#555"/></svg></span>
          <span class="w-[21px] h-[15px] border border-[#aaa] bg-[#f6f6f6]"><svg class="w-[19px] h-[13px]" viewBox="0 0 19 13"><path d="M8 1v7L3 12M8 8h9" fill="none" stroke="#222" stroke-width="1.500"/><path d="M8 6h6v2" fill="#f0d93a"/></svg></span>
          <span class="w-[21px] h-[15px] border-2 border-[#1e6ab0] bg-[#f6f6f6]"><svg class="w-[17px] h-[11px]" viewBox="0 0 17 11"><path d="M1 9l4-7h11l-4 7z" fill="#f0d93a" stroke="#111"/></svg></span>
          <span class="w-[21px] h-[15px] border border-[#aaa] bg-[#f6f6f6]"><svg class="w-[19px] h-[13px]" viewBox="0 0 19 13"><path d="M2 10h15" stroke="#e3d13a" stroke-width="2"/><path d="M4 8h12M13 4v4" stroke="#777"/></svg></span>
          <span class="w-[21px] h-[15px] border border-[#aaa] bg-[#f6f6f6]"><svg class="w-[19px] h-[13px]" viewBox="0 0 19 13"><text x="2" y="7" font-size="7" fill="#2a46b8" font-family="Liberation Sans">123</text><path d="M2 10h15" stroke="#e3d13a" stroke-width="2"/></svg></span>
          <span class="w-[21px] h-[15px] border-2 border-[#1e6ab0] bg-[#f6f6f6]"><svg class="w-[17px] h-[11px]" viewBox="0 0 17 11"><path d="M1 1h6v4H1z" fill="#fff" stroke="#111"/><path d="M9 5h6v5H9z" fill="#f0d93a" stroke="#111"/><path d="M10 2h5M2 8h5" stroke="#2a46b8"/></svg></span>
        </div>
        <span class="ml-[2px] w-[5px] h-[15px] border border-[#ccc]"></span>
        <svg class="ml-[7px] w-[6px] h-[10px]" viewBox="0 0 6 10"><path d="M5 1L1 5l4 4" fill="none" stroke="#555" stroke-width="1.600"/></svg>
        <div class="ml-[193px] w-[407px] h-[15px] bg-[#cdcdcd]"></div>
        <svg class="ml-[115px] w-[6px] h-[10px]" viewBox="0 0 6 10"><path d="M1 1l4 4-4 4" fill="none" stroke="#555" stroke-width="1.600"/></svg>
        <span class="ml-[6px] w-[5px] h-[15px] border border-[#ccc]"></span>
        <span class="ml-[2px] w-[21px] h-[15px] border border-[#aaa] bg-[#f6f6f6]"><svg class="w-[19px] h-[13px]" viewBox="0 0 19 13"><path d="M1 1l17 11M18 1L1 12" stroke="#e33"/><path d="M3 7h12" stroke="#2a46b8" stroke-width="2"/><circle cx="11" cy="6" r="3" fill="#222"/></svg></span>
        <span class="ml-[2px] w-[21px] h-[15px] border border-[#aaa] bg-[#f6f6f6]"><svg class="w-[19px] h-[13px]" viewBox="0 0 19 13"><path d="M2 5c3-2 6 0 9 2s5 1 6-1" fill="none" stroke="#2a78c4" stroke-width="1.500"/><path d="M3 5h5" stroke="#111"/></svg></span>
        <span class="ml-[2px] w-[21px] h-[15px] border border-[#aaa] bg-[#f6f6f6]"><svg class="w-[19px] h-[13px]" viewBox="0 0 19 13"><path d="M2 4c5-4 12-2 15 6-5-3-10-3-15-6z" fill="#3a6f8e"/><path d="M8 5l6 3" stroke="#c22fb0" stroke-width="2"/></svg></span>
        <svg class="ml-[12px] w-[10px] h-[10px]" viewBox="0 0 10 10"><path d="M8 2h1v1H8zM5 5h1v1H5zM8 5h1v1H8zM2 8h1v1H2zM5 8h1v1H5zM8 8h1v1H8z" fill="#aaa"/></svg>
      </div>
    </div>

    <!-- right toolbar -->
    <div class="w-[32px] shrink-0 bg-[#f0f0f0] border-l border-[#dcdcdc] flex flex-col items-center">
      <span class="mt-[12px] w-[22px] h-[22px]"><svg class="w-[22px] h-[22px]" viewBox="0 0 22 22"><circle cx="15" cy="6" r="4.500" fill="none" stroke="#444"/><circle cx="5" cy="14" r="4.500" fill="none" stroke="#444"/><path d="M13 8l2-4 2 4M4 12l1-1v6" fill="none" stroke="#444"/><path d="M15 11v11M10 16h11" stroke="#444" stroke-dasharray="3 1"/></svg></span>
      <span class="mt-[7px] w-[22px] h-[20px]"><svg class="w-[22px] h-[20px]" viewBox="0 0 22 20"><rect x="1" y="1" width="20" height="18" fill="#bfe4f6" stroke="#111"/><rect x="1" y="1" width="20" height="3" fill="#e33"/><path d="M3 7h16v6H3zM3 7l3 6 3-6 4 6 3-6 3 6" fill="none" stroke="#222"/></svg></span>
      <span class="mt-[8px] w-[21px] h-[21px]"><svg class="w-[21px] h-[21px]" viewBox="0 0 21 21"><path d="M1 9l8-8 11 11v7M1 9l11 11" fill="none" stroke="#222"/></svg></span>
      <span class="mt-[9px] w-[20px] h-[20px]"><svg class="w-[20px] h-[20px]" viewBox="0 0 20 20"><path d="M2 8l8-2v10l-8 3z" fill="#e33" stroke="#222"/><path d="M10 6l2 2v8l-2 0z" fill="#fff" stroke="#222"/><circle cx="14" cy="5" r="4.500" fill="none" stroke="#e33" stroke-width="1.500"/></svg></span>
      <span class="mt-[7px] w-[20px] h-[21px]"><svg class="w-[20px] h-[21px]" viewBox="0 0 20 21"><path d="M6 1l4 2v17l-4-2z" fill="#777" stroke="#111"/><path d="M10 8l10-3v7l-10 6z" fill="#555" stroke="#111"/><path d="M1 14l4-1v4l-4 1z" fill="#ccc" stroke="#111"/></svg></span>
      <span class="mt-[10px] w-[20px] h-[20px]"><svg class="w-[20px] h-[20px]" viewBox="0 0 20 20"><path d="M10 0v10L2 18M10 10l8 8" fill="none" stroke="#111" stroke-width="1.500"/><circle cx="10" cy="10" r="2" fill="#e22"/></svg></span>
      <span class="mt-[9px] w-[22px] h-[18px]"><svg class="w-[22px] h-[18px]" viewBox="0 0 22 18"><path d="M1 2l20 13" stroke="#111" stroke-width="2"/><path d="M0 1l3 2M19 14l3 2" stroke="#e22" stroke-width="2"/></svg></span>
      <span class="mt-[17px] w-[22px] h-[12px]"><svg class="w-[22px] h-[12px]" viewBox="0 0 22 12"><path d="M1 5l7-4h13v5H9z" fill="#e33" stroke="#111"/><path d="M1 5l8 6h12V6H9z" fill="#fff" stroke="#111"/></svg></span>
      <span class="mt-[10px] w-[22px] h-[22px]"><svg class="w-[22px] h-[22px]" viewBox="0 0 22 22"><path d="M6 1v7M6 16v6M4 6l2 3 2-3M4 18l2-3 2 3" fill="none" stroke="#111"/><path d="M1 9h10l10-8v5L11 14H1z" fill="#e33"/><path d="M1 9h10v5H1z" fill="#d44" stroke="#fff"/></svg></span>
      <span class="mt-[7px] w-[22px] h-[22px]"><svg class="w-[22px] h-[22px]" viewBox="0 0 22 22"><path d="M0 21l6-6h16l-6 6z" fill="#bbb"/><path d="M0 13h22v8H0z" fill="#ccc" opacity=".3"/><path d="M7 14V3M4 6l3-4 3 4" fill="none" stroke="#e22" stroke-width="1.500"/><path d="M7 14l9-7M13 6h4v4" fill="none" stroke="#2a8a2a" stroke-width="1.500"/><path d="M7 14h13M18 12l3 2-3 2" fill="none" stroke="#22d" stroke-width="1.500"/></svg></span>
      <span class="mt-[5px] w-[22px] h-[22px]"><svg class="w-[22px] h-[22px]" viewBox="0 0 22 22"><rect x="2" y="1" width="13" height="10" fill="#bfe4f6" stroke="#333"/><path d="M7 1v10M11 1v10" stroke="#333"/><path d="M2 11h16l2 3H2z" fill="#8a8a18" stroke="#111"/><path d="M2 14h16v5H2z" fill="#f0d93a" stroke="#111"/><path d="M18 10h4M18 13h4M18 16h4" stroke="#111"/></svg></span>
      <span class="mt-[17px] w-[20px] h-[20px]"><svg class="w-[20px] h-[20px]" viewBox="0 0 20 20"><path d="M1 1h18v4h-6v10h6v4H1v-4h6V5H1z" fill="#f06a74" stroke="#111"/></svg></span>
      <span class="mt-[9px] w-[20px] h-[22px]"><svg class="w-[20px] h-[22px]" viewBox="0 0 20 22"><path d="M10 1h9v14h-9z" fill="#e33" stroke="#111"/><path d="M6 4h8v14H6z" fill="#f06a74" stroke="#111"/><path d="M1 8h9v13H1z" fill="#888" stroke="#111"/></svg></span>
      <span class="mt-[8px] w-[20px] h-[20px]"><svg class="w-[20px] h-[20px]" viewBox="0 0 20 20"><path d="M3 1v5M3 5h16" stroke="#111"/><path d="M10 6l6 7H4z" fill="#f0505a" stroke="#111"/><path d="M3 15h14M4 18l2-3M9 18l2-3M14 18l2-3" stroke="#111"/></svg></span>
      <span class="mt-[7px] w-[20px] h-[21px]"><svg class="w-[20px] h-[21px]" viewBox="0 0 20 21"><path d="M1 9l8-8h10v20h-7V9z" fill="#eee" stroke="#111"/><path d="M12 9h7v12h-7z" fill="#777" stroke="#111"/><path d="M9 9l10-8" stroke="#e22"/><circle cx="9" cy="11" r="2.500" fill="#fff" stroke="#e22" stroke-width="1.500"/></svg></span>
      <span class="mt-[17px] w-[22px] h-[20px]"><svg class="w-[22px] h-[20px]" viewBox="0 0 22 20"><path d="M2 3h16M2 1v4M18 1v4" stroke="#111"/><path d="M4 3h12" stroke="#e22" stroke-width="2"/><path d="M1 9h15v9H1zM6 9v9M11 9v9" fill="none" stroke="#111" stroke-width="1.300"/><path d="M19 3v13M17 14l2 3 2-3" fill="none" stroke="#111"/><path d="M1 18h20" stroke="#e22" stroke-width="1.500"/></svg></span>
      <span class="mt-[10px] w-[22px] h-[19px]"><svg class="w-[22px] h-[19px]" viewBox="0 0 22 19"><path d="M1 1h21v17H1z" fill="#a4a4a4"/><path d="M7 3v9M14 3v9M19 3v7" stroke="#f0f0f0" stroke-width="2"/></svg></span>
      <span class="mt-[8px] w-[22px] h-[21px]"><svg class="w-[22px] h-[21px]" viewBox="0 0 22 21"><path d="M1 11L11 3" stroke="#a33" stroke-width="1.500"/><path d="M12 1l2 3 3 1-2 2 0 3-3-1-3 1 1-3-2-2 3-1z" fill="#f0bd5a" stroke="#555"/><path d="M5 19v-7h11v7M10 12v7M19 6v13" fill="none" stroke="#111"/><path d="M1 19h21" stroke="#e22" stroke-width="2"/></svg></span>
      <span class="mt-[17px] w-[22px] h-[22px]"><svg class="w-[22px] h-[22px]" viewBox="0 0 22 22"><path d="M1 7l5-5h10v5h5v13M1 7h15v13M1 7v13M6 7v14M11 7v14M1 14h20" fill="none" stroke="#111"/><path d="M1 7l5-5h10M16 7l5 4" fill="none" stroke="#e22" stroke-width="1.300"/><path d="M1 20h1M6 20h1M16 20h1" stroke="#e22" stroke-width="2"/></svg></span>
    </div>
  </div>

  <!-- view tab row -->
  <div class="h-[20px] shrink-0 flex items-center bg-[#f0f0f0] border-t border-[#ddd] border-b text-[11px]">
    <span class="ml-[3px] w-[36px] h-[16px] leading-[15px] pl-[2px] border border-[#bdbdbd]">Vue</span>
    <span class="ml-[3px] w-[45px] h-[16px] leading-[16px] pl-[2px] bg-white">Vue:1</span>
  </div>

  <!-- status bar -->
  <div class="h-[19px] shrink-0 flex items-center bg-[#f0f0f0] text-[11px] whitespace-nowrap">
    <svg class="ml-[5px] w-[13px] h-[13px]" viewBox="0 0 13 13"><path d="M1 1h4M1 1v4M12 12H8M12 12V8" stroke="#111" stroke-dasharray="1 1"/><path d="M9 1v6M6 4h6" stroke="#111"/><path d="M1 12l4-4" stroke="#e22"/></svg>
    <svg class="ml-[4px] w-[14px] h-[14px]" viewBox="0 0 14 14"><path d="M1 1l3 6 3-6" fill="none" stroke="#111" stroke-width="1.500"/><path d="M8 4c0-3 5-3 5 0 0 2-2 2-2 4" fill="none" stroke="#111"/><path d="M0 12h13" stroke="#e3d13a" stroke-width="2"/></svg>
    <svg class="ml-[9px] w-[13px] h-[13px]" viewBox="0 0 13 13"><path d="M1 1h4v4H1zM8 1h4v4H8zM1 8h4v4H1zM8 8h4v4H8z" fill="#fff" stroke="#111"/><path d="M2 2h2v2H2zM9 9h2v2H9z" fill="#d22"/></svg>
    <svg class="ml-[3px] w-[15px] h-[15px]" viewBox="0 0 15 15"><path d="M1 2l13 11M14 2L1 13" stroke="#e22"/><path d="M1 8h13" stroke="#22d" stroke-width="1.500"/><path d="M7 2v8" stroke="#111"/></svg>
    <svg class="ml-[7px] w-[13px] h-[13px]" viewBox="0 0 13 13"><path d="M1 4h8v8H1zM4 1h8v8H4zM1 4l3-3M9 4l3-3M1 12l3-3M9 12l3-3" fill="none" stroke="#111"/></svg>
    <svg class="ml-[5px] w-[13px] h-[13px]" viewBox="0 0 13 13"><path d="M1 4h8v8H1z" fill="#777" stroke="#111"/><path d="M1 4l3-3h8v8l-3 3M9 4l3-3" fill="#fff" stroke="#111"/></svg>
    <svg class="ml-[5px] w-[13px] h-[13px]" viewBox="0 0 13 13"><path d="M1 4h8v8H1zM1 4l3-3h8v8l-3 3M9 4l3-3" fill="#fff" stroke="#111"/></svg>
    <span class="ml-[316px] w-[12px] h-[12px] rounded-full bg-[#c9c9c9] border border-[#888]"></span>
    <span class="ml-[6px] w-[198px] pt-[2px]">Résultats MEF: absents</span>
    <span class="h-[19px] w-px bg-[#ddd]"></span>
    <span class="w-[34px]"></span>
    <span class="h-[19px] w-px bg-[#ddd]"></span>
    <span class="w-[49px] pl-[7px] pt-[2px]">464</span>
    <span class="h-[19px] w-px bg-[#ddd]"></span>
    <span class="w-[22px] flex justify-center"><svg class="w-[13px] h-[12px]" viewBox="0 0 13 12"><text x="0" y="8" font-size="8" fill="#222" font-family="Liberation Sans">A-1</text><path d="M0 11h13" stroke="#d22"/></svg></span>
    <span class="h-[19px] w-px bg-[#ddd]"></span>
    <span class="w-[49px] pl-[7px] pt-[2px]">826</span>
    <span class="h-[19px] w-px bg-[#ddd]"></span>
    <span class="w-[150px] pl-[9px] pt-[2px]">Voile40Int</span>
    <span class="h-[19px] w-px bg-[#ddd]"></span>
    <svg class="ml-[6px] w-[14px] h-[14px]" viewBox="0 0 14 14"><path d="M4 0v14M0 11h14" stroke="#111"/><path d="M4 3h8M12 3v8" stroke="#111" stroke-dasharray="1 1"/><path d="M10 3h3M11.500 1v4" stroke="#e22"/></svg>
    <span class="ml-[7px] w-[170px] overflow-hidden pt-[2px]">x=-60859,27; y=-57583,66; z=16,2</span>
    <span class="h-[19px] w-px bg-[#ddd]"></span>
    <svg class="ml-[5px] w-[14px] h-[11px]" viewBox="0 0 14 11"><path d="M2 2h10M2 9h10M2 2v7M12 2v7" stroke="#111" stroke-width="1.500"/><path d="M1 2h2M11 2h2" stroke="#d22" stroke-width="2"/></svg>
    <span class="ml-[6px] w-[71px] pt-[2px]">0,00</span>
    <span class="h-[19px] w-px bg-[#ddd]"></span>
    <span class="ml-[8px] pt-[2px] text-[#1b1b3a]">[m] [kN] [Deg]</span>
  </div>

  <!-- windows taskbar -->
  <div class="h-[40px] shrink-0 flex items-center bg-[#2c2e32] text-white">
    <span class="w-[48px] h-[40px] flex items-center justify-center"><svg class="w-[16px] h-[16px]" viewBox="0 0 16 16"><path d="M0 2.200l6.500-.9v6.300H0zM7.300 1.200L16 0v7.600H7.300zM0 8.400h6.500v6.300L0 13.800zM7.300 8.400H16V16l-8.700-1.200z" fill="#fff"/></svg></span>
    <span class="w-[48px] h-[40px] flex items-center justify-center"><svg class="w-[16px] h-[16px]" viewBox="0 0 16 16"><circle cx="10" cy="6" r="5" fill="none" stroke="#fff" stroke-width="1.300"/><path d="M6.500 9.500L1 15" stroke="#fff" stroke-width="1.500"/></svg></span>
    <span class="w-[48px] h-[40px] flex items-center justify-center"><span class="w-[15px] h-[15px] rounded-full border-2 border-white"></span></span>
    <span class="w-[48px] h-[40px] flex items-center justify-center"><svg class="w-[16px] h-[16px]" viewBox="0 0 16 16"><path d="M1 0h10M1 15h10M1 4h10v7H1z" fill="none" stroke="#fff" stroke-width="1.200"/><path d="M14 1v3M14 6v3M14 11v3" stroke="#fff" stroke-width="2"/></svg></span>
    <span class="relative w-[48px] h-[40px] flex items-center justify-center"><svg class="w-[24px] h-[22px]" viewBox="0 0 24 22"><path d="M0 6l12-6 12 6v16H0z" fill="#3f9fe6"/><path d="M0 6l12 7 12-7" fill="#9ed3f6"/></svg><span class="absolute left-[24px] top-[17px] w-[16px] h-[16px] rounded-full bg-[#2c2e32] border border-[#888] text-[11px] font-bold leading-[14px] text-center">6</span></span>
    <span class="ml-[3px] w-[48px] h-[40px] flex items-center justify-center"><svg class="w-[22px] h-[22px]" viewBox="0 0 22 22"><rect x="7" y="1" width="15" height="20" fill="#fff"/><path d="M12 5h8M12 8h8M12 11h8M12 14h8M12 17h8" stroke="#2b579a"/><path d="M0 3l13-2v20L0 19z" fill="#2b579a"/><text x="2" y="14" font-size="9" font-weight="700" fill="#fff" font-family="Liberation Sans">W</text></svg></span>
    <span class="relative w-[48px] h-[40px] flex items-center justify-center"><svg class="w-[23px] h-[23px]" viewBox="0 0 24 24"><path d="M12 12L2.600 6.500A11 11 0 0 1 22.400 7H12z" fill="#db4437"/><path d="M12 12l-5.500 9.500A11 11 0 0 1 2.600 6.500z" fill="#0f9d58"/><path d="M12 12h10.400A11 11 0 0 1 6.500 21.500z" fill="#f4b400"/><circle cx="12" cy="12" r="5.500" fill="#fff"/><circle cx="12" cy="12" r="4.300" fill="#4285f4"/></svg><span class="absolute left-[4px] right-[4px] bottom-0 h-[2px] bg-[#76b9ed]"></span></span>
    <span class="relative w-[48px] h-[40px] flex items-center justify-center"><svg class="w-[22px] h-[20px]" viewBox="0 0 22 20"><path d="M0 1h8l2 2h12v16H0z" fill="#f2c94c"/><path d="M0 6h22v13H0z" fill="#f8dc7a"/><path d="M6 13h10v6h-3v-3H9v3H6z" fill="#2a8ed6"/></svg><span class="absolute left-[9px] right-[9px] bottom-0 h-[2px] bg-[#76b9ed]"></span></span>
    <span class="relative w-[48px] h-[40px] flex items-center justify-center bg-[#54565a]"><svg class="w-[24px] h-[24px]" viewBox="0 0 24 24"><rect width="24" height="24" fill="#f8d9a8"/><path d="M5 3h9c5 0 6 3 6 5 0 3-2 4-4 5l4 7h-5l-3-6h-3v6H5z" fill="#eda132"/><path d="M9 7v3h4c2 0 2-3 0-3z" fill="#f8d9a8"/></svg><span class="absolute left-0 right-0 bottom-0 h-[2px] bg-[#76b9ed]"></span></span>
    <div class="ml-auto flex items-center h-[40px]">
      <svg class="w-[12px] h-[7px]" viewBox="0 0 12 7"><path d="M.5 6.500L6 1l5.500 5.500" fill="none" stroke="#fff" stroke-width="1.200"/></svg>
      <svg class="ml-[11px] w-[17px] h-[11px]" viewBox="0 0 17 11"><rect x="4" y="2" width="12" height="8" fill="none" stroke="#fff"/><rect x="6" y="4" width="8" height="4" fill="#fff"/><path d="M1 0v3M3 0v3M0 3h4v2H0zM2 5v5" stroke="#fff"/></svg>
      <svg class="ml-[7px] w-[15px] h-[12px]" viewBox="0 0 15 12"><path d="M1 11C1 6 5 1 13 1M4 11c0-3 3-7 9-7M7 11c0-2 2-4 6-4M10 11c0-1 1-2 3-2" fill="none" stroke="#ddd"/><circle cx="13" cy="10" r="1.500" fill="#fff"/></svg>
      <svg class="ml-[9px] w-[15px] h-[12px]" viewBox="0 0 15 12"><path d="M1 4h3l4-3v10L4 8H1z" fill="none" stroke="#fff"/><path d="M10 4l4 4M14 4l-4 4" stroke="#fff"/></svg>
      <div class="ml-[7px] w-[68px] flex flex-col items-center text-[11.500px] leading-[17px] text-white"><span>21:53</span><span class="whitespace-nowrap">28/02/2021</span></div>
      <span class="relative ml-[4px] w-[48px] h-[40px] flex items-center justify-center"><svg class="w-[17px] h-[15px] -translate-y-[3px] -translate-x-[8px]" viewBox="0 0 17 15"><path d="M0 0h17v11H6l-3 4v-4H0z" fill="#fff"/></svg><span class="absolute left-[16px] top-[18px] w-[16px] h-[16px] rounded-full bg-[#2c2e32] border border-[#aaa] text-[11px] font-bold leading-[14px] text-center">2</span></span>
    </div>
  </div>
</div>
</body>
</html>
